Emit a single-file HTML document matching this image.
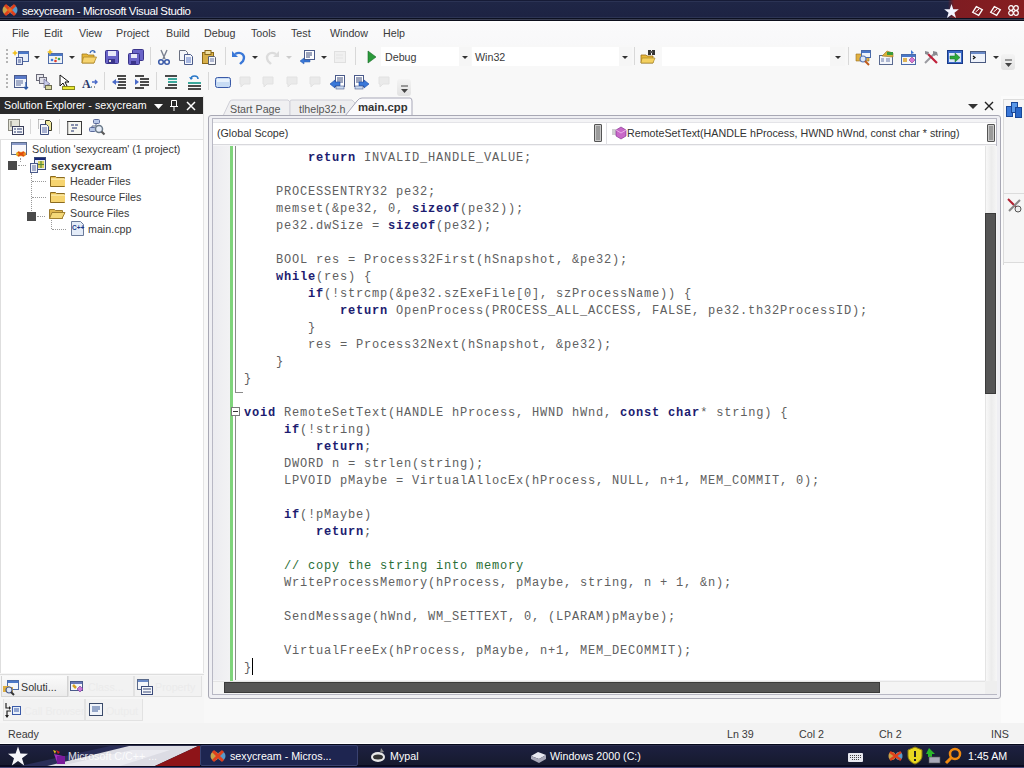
<!DOCTYPE html>
<html><head><meta charset="utf-8">
<style>
*{margin:0;padding:0;box-sizing:border-box}
html,body{width:1024px;height:768px;overflow:hidden;background:#f8f8f8;font-family:"Liberation Sans",sans-serif;font-size:10.7px;color:#3a3a3a}
.a{position:absolute}
.t{position:absolute;white-space:pre;line-height:13px}
svg{position:absolute;overflow:visible}
.cl{position:absolute;left:244px;white-space:pre;font-family:"Liberation Mono",monospace;font-size:12px;letter-spacing:0.8px;line-height:17px;color:#606060}
.k{color:#1c1c70;font-weight:bold}
.c{color:#2a6e35}
.dd{position:absolute;width:0;height:0;border-left:3px solid transparent;border-right:3px solid transparent;border-top:3px solid #333}
.sep{position:absolute;width:1px;background:#d8d8d8}
.grip{position:absolute;width:2px;height:16px;background:repeating-linear-gradient(180deg,#b4b4b4 0,#b4b4b4 2px,transparent 2px,transparent 4px)}
</style></head><body>

<!-- ===== title bar ===== -->
<div class="a" style="left:0;top:0;width:1024px;height:21px;background:linear-gradient(180deg,#161b36 0,#161b36 1px,#2b3354 1px,#2b3354 2px,#1f2646 2px,#1d2343 17px,#2c3454 17px,#2c3454 18px,#0c1020 18px,#0c1020 19px,#3a3e52 19px,#3a3e52 20px,#0c0f1c 20px)"></div>
<div class="a" style="left:948px;top:0;width:76px;height:18px;background:linear-gradient(90deg,rgba(128,28,32,0) 0,#7e1c22 6px,#861e20 100%)"></div>
<svg style="left:2px;top:3px" width="16" height="14" viewBox="0 0 16 14">
<ellipse cx="4.5" cy="7" rx="4" ry="4.5" fill="#c9a24a"/><ellipse cx="11.5" cy="7" rx="4" ry="4.5" fill="#5a9ac8"/>
<path d="M3 2 L13 12 M13 2 L3 12" stroke="#e0401c" stroke-width="3"/><circle cx="8" cy="7" r="2" fill="#f06a1a"/></svg>
<div class="t" style="left:22px;top:5px;color:#fff;font-size:11.5px;letter-spacing:-0.4px">sexycream - Microsoft Visual Studio</div>
<svg style="left:944px;top:4px" width="15" height="14" viewBox="0 0 20 19"><path d="M10 0 L12.4 7 L20 7.2 L14 11.8 L16.2 19 L10 14.6 L3.8 19 L6 11.8 L0 7.2 L7.6 7 Z" fill="#f4f4ff"/></svg>
<svg style="left:972px;top:6px" width="11" height="10" viewBox="0 0 11 10"><path d="M5.5 0.5 L10.5 5 L5.5 9.5 L0.5 5 Z" fill="none" stroke="#fff" stroke-width="1.3" transform="rotate(-15 5.5 5)"/><path d="M3.5 6 L7 3" stroke="#fff" stroke-width="1"/></svg>
<svg style="left:990px;top:6px" width="11" height="10" viewBox="0 0 11 10"><path d="M5.5 0.5 L10.5 5 L5.5 9.5 L0.5 5 Z" fill="none" stroke="#fff" stroke-width="1.3" transform="rotate(-15 5.5 5)"/><path d="M3.5 6 L7 3" stroke="#fff" stroke-width="1"/></svg>
<svg style="left:1008px;top:5px" width="11" height="11" viewBox="0 0 11 11"><circle cx="3" cy="3" r="2.3" fill="none" stroke="#fff" stroke-width="1.2"/><circle cx="8" cy="3" r="2.3" fill="none" stroke="#fff" stroke-width="1.2"/><circle cx="3" cy="8" r="2.3" fill="none" stroke="#fff" stroke-width="1.2"/><circle cx="8" cy="8" r="2.3" fill="none" stroke="#fff" stroke-width="1.2"/></svg>

<!-- ===== menu bar ===== -->
<div class="a" style="left:0;top:21px;width:1024px;height:24px;background:linear-gradient(180deg,#fff 0,#fafafb 3px,#f8f8f9 100%)"></div>
<div class="t" style="left:12px;top:27px">File</div>
<div class="t" style="left:44px;top:27px">Edit</div>
<div class="t" style="left:79px;top:27px">View</div>
<div class="t" style="left:116px;top:27px">Project</div>
<div class="t" style="left:166px;top:27px">Build</div>
<div class="t" style="left:204px;top:27px">Debug</div>
<div class="t" style="left:251px;top:27px">Tools</div>
<div class="t" style="left:291px;top:27px">Test</div>
<div class="t" style="left:330px;top:27px">Window</div>
<div class="t" style="left:383px;top:27px">Help</div>
<!-- toolbar area -->
<div class="a" style="left:0;top:45px;width:1024px;height:52px;background:#f8f8f8"></div>

<div class="grip" style="left:6px;top:49px"></div>
<svg style="left:13px;top:49px" width="16" height="16" viewBox="0 0 16 16"><rect x="5.5" y="2.5" width="10" height="10" fill="#e8eef8" stroke="#4f6ca8"/><rect x="6" y="3" width="9" height="2" fill="#4a78c8"/><rect x="3.5" y="8.5" width="6" height="7" fill="#e0e8f8" stroke="#4a5a90"/><path d="M5 11h3M5 13h3" stroke="#4a5a90"/><path d="M2 1l1 2 2 1-2 1-1 2-1-2-2-1 2-1z" fill="#f0c020"/></svg>
<div class="dd" style="left:34px;top:56px;border-top-color:#333"></div>
<svg style="left:47px;top:49px" width="16" height="16" viewBox="0 0 16 16"><rect x="1.5" y="4.5" width="14" height="10" fill="#eef2f8" stroke="#4f6ca8"/><rect x="2" y="5" width="13" height="2" fill="#4a78c8"/><circle cx="5" cy="11" r="1.3" fill="#3a7ad8"/><circle cx="8.5" cy="12" r="1.3" fill="#e03a2a"/><circle cx="12" cy="10" r="1.3" fill="#3aa85a"/><circle cx="9" cy="9" r="1.1" fill="#c8a020"/><path d="M3 0l1 2 2 1-2 1-1 2-1-2-2-1 2-1z" fill="#f0c020"/></svg>
<div class="dd" style="left:69px;top:56px;border-top-color:#333"></div>
<svg style="left:81px;top:49px" width="16" height="16" viewBox="0 0 16 16"><path d="M1 5h5l1 1h6v8H1z" fill="#e8b838" stroke="#a07820" stroke-width=".8"/><path d="M2.5 8h13l-2.5 6H1z" fill="#f6d470" stroke="#b08828" stroke-width=".8"/><path d="M9 4c1-3 4-3 5-1" stroke="#3a6ab8" stroke-width="1.3" fill="none"/><path d="M13 1.5l2 2-2.5.5z" fill="#3a6ab8"/></svg>
<svg style="left:104px;top:49px" width="16" height="16" viewBox="0 0 16 16"><rect x="1.5" y="1.5" width="13" height="13" rx="1" fill="#6a64c8" stroke="#3a348a"/><rect x="4" y="2" width="8" height="5" fill="#e8e8f8"/><rect x="4" y="10" width="7" height="4" fill="#3a348a"/><rect x="5" y="11" width="2" height="2" fill="#ddd"/></svg>
<svg style="left:128px;top:49px" width="16" height="16" viewBox="0 0 16 16"><rect x="4.5" y="0.5" width="11" height="11" rx="1" fill="#6a64c8" stroke="#3a348a"/><rect x="0.5" y="4.5" width="11" height="11" rx="1" fill="#6a64c8" stroke="#3a348a"/><rect x="3" y="5" width="6" height="4" fill="#e8e8f8"/><rect x="3" y="12" width="5" height="3" fill="#3a348a"/></svg>
<div class="sep" style="left:150px;top:47px;height:18px"></div>
<svg style="left:156px;top:49px" width="16" height="16" viewBox="0 0 16 16"><path d="M5 1l4 9M11 1l-4 9" stroke="#7a8090" stroke-width="1.4"/><circle cx="5" cy="13" r="2.3" fill="none" stroke="#3a5aa8" stroke-width="1.5"/><circle cx="11" cy="13" r="2.3" fill="none" stroke="#3a5aa8" stroke-width="1.5"/></svg>
<svg style="left:178px;top:49px" width="16" height="16" viewBox="0 0 16 16"><path d="M1.5 1.5h6l2 2v8h-8z" fill="#f4f6fa" stroke="#6a7080"/><path d="M6.5 5.5h6l2 2v8h-8z" fill="#f4f6fa" stroke="#4a5a8a"/><path d="M8 9h5M8 11h5M8 13h5" stroke="#5a78c8"/></svg>
<svg style="left:201px;top:49px" width="16" height="16" viewBox="0 0 16 16"><rect x="1.5" y="3.5" width="11" height="11" fill="#d8b048" stroke="#8a6818"/><rect x="4" y="1.5" width="6" height="4" fill="#f0e0a0" stroke="#8a6818"/><path d="M7.5 7.5h6l1 1v7h-7z" fill="#f6f7fa" stroke="#5a6070"/><path d="M9 10h4M9 12h4" stroke="#6a78a8"/></svg>
<div class="sep" style="left:225px;top:47px;height:18px"></div>
<svg style="left:231px;top:49px" width="16" height="16" viewBox="0 0 16 16"><path d="M4 5c6-3 11 1 8 7l-3 3" stroke="#3a78d8" stroke-width="2.4" fill="none"/><path d="M1 2v6h6z" fill="#3a78d8"/></svg>
<div class="dd" style="left:252px;top:56px;border-top-color:#333"></div>
<svg style="left:264px;top:49px" width="16" height="16" viewBox="0 0 16 16"><path d="M12 5c-6-3-11 1-8 7l3 3" stroke="#dcdcdc" stroke-width="2.4" fill="none"/><path d="M15 2v6h-6z" fill="#dcdcdc"/></svg>
<div class="dd" style="left:286px;top:56px;border-top-color:#ccc"></div>
<svg style="left:299px;top:49px" width="16" height="16" viewBox="0 0 16 16"><rect x="5.5" y="1.5" width="10" height="9" fill="#fff" stroke="#4a5a8a"/><path d="M7 4h6M7 6h6M7 8h4" stroke="#3a4a7a"/><path d="M1 12l4-3v2h6v2H5v2z" fill="#3a78d8" stroke="#2a58a8" stroke-width=".5"/></svg>
<div class="dd" style="left:321px;top:56px;border-top-color:#333"></div>
<svg style="left:332px;top:49px" width="16" height="16" viewBox="0 0 16 16"><rect x="2.5" y="2.5" width="11" height="11" fill="#f0f0f0" stroke="#e0e0e0"/><path d="M4 6h7M4 9h7" stroke="#e4e4e4"/></svg>
<div class="sep" style="left:355px;top:47px;height:18px"></div>
<svg style="left:364px;top:49px" width="16" height="16" viewBox="0 0 16 16"><path d="M4 2l8 6-8 6z" fill="#2a9a3a" stroke="#1a6a2a" stroke-width=".6"/></svg>
<div class="a" style="left:381px;top:47px;width:90px;height:19px;background:#fff"></div>
<div class="t" style="left:385px;top:51px;">Debug</div>
<div class="a" style="left:459px;top:47px;width:12px;height:19px;background:#f6f6f6"></div>
<div class="dd" style="left:462px;top:56px;border-top-color:#333"></div>
<div class="a" style="left:472px;top:47px;width:160px;height:19px;background:#fff"></div>
<div class="t" style="left:475px;top:51px;">Win32</div>
<div class="a" style="left:619px;top:47px;width:13px;height:19px;background:#f6f6f6"></div>
<div class="dd" style="left:622px;top:56px;border-top-color:#333"></div>
<div class="sep" style="left:634px;top:47px;height:18px"></div>
<svg style="left:640px;top:49px" width="16" height="16" viewBox="0 0 16 16"><path d="M1 6h5l1 1h6v7H1z" fill="#e8b838" stroke="#9a7020" stroke-width=".8"/><path d="M2 9h13l-2 5H1z" fill="#f4d060" stroke="#a08020" stroke-width=".6"/><rect x="8" y="1" width="3" height="5" fill="#333"/><rect x="12" y="1" width="3" height="5" fill="#333"/><rect x="10" y="2" width="3" height="2" fill="#555"/></svg>
<div class="a" style="left:662px;top:47px;width:183px;height:19px;background:#fff"></div>
<div class="a" style="left:830px;top:47px;width:15px;height:19px;background:#f6f6f6"></div>
<div class="dd" style="left:835px;top:56px;border-top-color:#333"></div>
<div class="sep" style="left:848px;top:47px;height:18px"></div>
<svg style="left:855px;top:49px" width="16" height="16" viewBox="0 0 16 16"><path d="M1 5h6l1 1h6v6H1z" fill="#e0b040" stroke="#9a7020" stroke-width=".6"/><rect x="6.5" y="1.5" width="9" height="7" fill="#eef3fa" stroke="#4a6aa8"/><rect x="7" y="2" width="8" height="2" fill="#4a78c8"/><circle cx="8" cy="10" r="3" fill="#dde8f8" stroke="#5a7ab8" stroke-width="1.2"/><path d="M10 12l4 4" stroke="#c05a1a" stroke-width="2"/></svg>
<svg style="left:878px;top:49px" width="16" height="16" viewBox="0 0 16 16"><rect x="1.5" y="6.5" width="13" height="9" fill="#f4f6fa" stroke="#5a6a90"/><path d="M3 10h3M3 12h3M8 10h4M8 12h4" stroke="#6a7aa8"/><path d="M4 7l5-5 6 2v4z" fill="#d8b038" stroke="#9a7020" stroke-width=".6"/><rect x="9" y="3" width="6" height="3" fill="#3a9a3a"/></svg>
<svg style="left:900px;top:49px" width="16" height="16" viewBox="0 0 16 16"><rect x="1.5" y="5.5" width="14" height="10" fill="#f4f6fa" stroke="#4a6aa8"/><rect x="2" y="6" width="13" height="2" fill="#4a78c8"/><path d="M3 10h4M3 12h4" stroke="#d8a020" stroke-width="1.5"/><path d="M12 8l3 3-3 3-3-3z" fill="#d878d0" stroke="#8a3a8a" stroke-width=".6"/><path d="M11 1l3 3-3 1z" fill="#3a78d8"/></svg>
<svg style="left:923px;top:49px" width="16" height="16" viewBox="0 0 16 16"><path d="M2 14L12 4" stroke="#9a9aa0" stroke-width="2"/><path d="M14 14L5 5" stroke="#c0203a" stroke-width="2.2"/><path d="M10 2l4 1 1 4-2-1-2 1-1-2z" fill="#8a8a90"/><path d="M2 2l4 1-1 3-3-1z" fill="#8a8a90"/></svg>
<svg style="left:947px;top:49px" width="16" height="16" viewBox="0 0 16 16"><rect x="0.5" y="1.5" width="15" height="13" fill="#3a6ac8" stroke="#1a3a88"/><rect x="2" y="4" width="12" height="9" fill="#dde8f8"/><path d="M3 7h5V4l5 4.5-5 4.5v-3H3z" fill="#2aa83a" stroke="#1a6a2a" stroke-width=".5"/></svg>
<svg style="left:970px;top:49px" width="16" height="16" viewBox="0 0 16 16"><rect x="0.5" y="2.5" width="15" height="11" fill="#eef2fa" stroke="#4a5a80"/><rect x="1" y="3" width="14" height="2" fill="#6a8ac8"/><path d="M3 7l2 1.5-2 1.5" stroke="#111" stroke-width="1.2" fill="none"/></svg>
<div class="dd" style="left:993px;top:56px;border-top-color:#333"></div>
<div class="a" style="left:1001px;top:54px;width:14px;height:16px;background:linear-gradient(180deg,#f4f4f4,#e2e2e2);border-radius:3px"></div>
<svg style="left:1004px;top:59px" width="9" height="10" viewBox="0 0 9 10"><path d="M1 1h7" stroke="#444"/><path d="M1 4h7l-3.5 4z" fill="#444"/></svg>
<div class="grip" style="left:6px;top:74px"></div>
<svg style="left:13px;top:74px" width="16" height="16" viewBox="0 0 16 16"><rect x="1.5" y="1.5" width="12" height="12" fill="#f0f4fa" stroke="#4a5a8a"/><rect x="2" y="2" width="11" height="3" fill="#5a7ac8"/><path d="M3 7h7M3 9h7M3 11h5" stroke="#5a6a9a"/><path d="M13 8v7M11 13l2 2 2-2" stroke="#2a58a8" stroke-width="1.3" fill="none"/></svg>
<svg style="left:36px;top:74px" width="16" height="16" viewBox="0 0 16 16"><rect x="0.5" y="0.5" width="7" height="6" fill="#e8e8ee" stroke="#6a6a78"/><rect x="3.5" y="3.5" width="7" height="6" fill="#e0e0e8" stroke="#6a6a78"/><path d="M8 5l6 5-3 1 2 3-1 1-2-3-2 2z" fill="#c8cce8" stroke="#5a5a8a" stroke-width=".6"/><rect x="9.5" y="11.5" width="6" height="4" fill="#d8d8a0" stroke="#6a6a50"/></svg>
<svg style="left:59px;top:74px" width="16" height="16" viewBox="0 0 16 16"><path d="M1 1v11l3-3 2 4 2-1-2-4h4z" fill="#fff" stroke="#111" stroke-width="1"/><rect x="3.5" y="12.5" width="12" height="3" fill="#e8e830" stroke="#8a8a20"/></svg>
<svg style="left:82px;top:74px" width="16" height="16" viewBox="0 0 16 16"><text x="0" y="14" font-family="Liberation Serif" font-weight="bold" font-size="12" fill="#2a3a6a">A</text><path d="M10 8h5M13 6l2 2-2 2" stroke="#4a6ac8" stroke-width="1.4" fill="none"/><path d="M9 13h1M12 13h1" stroke="#333"/></svg>
<div class="sep" style="left:104px;top:72px;height:18px"></div>
<svg style="left:111px;top:74px" width="16" height="16" viewBox="0 0 16 16"><path d="M6 2h9M7 5h8M7 8h8M7 11h8M6 14h9" stroke="#111" stroke-width="1.4"/><path d="M1 8l4-3v6z" fill="#4a6ac8"/><path d="M4 8h4" stroke="#4a6ac8" stroke-width="1.4"/></svg>
<svg style="left:134px;top:74px" width="16" height="16" viewBox="0 0 16 16"><path d="M1 2h9M6 5h9M6 8h9M6 11h9M1 14h9" stroke="#111" stroke-width="1.4"/><path d="M5 8L1 5v6z" fill="#4a6ac8"/></svg>
<div class="sep" style="left:156px;top:72px;height:18px"></div>
<svg style="left:163px;top:74px" width="16" height="16" viewBox="0 0 16 16"><path d="M2 2h12M5 5h9M5 8h9M5 11h9M2 14h12" stroke="#111" stroke-width="1.3"/><path d="M5 5h9M5 8h9" stroke="#38c8b8" stroke-width="1.3"/></svg>
<svg style="left:186px;top:74px" width="16" height="16" viewBox="0 0 16 16"><path d="M2 9h13M2 12h13M2 15h13" stroke="#111" stroke-width="1.3"/><path d="M2 9h13" stroke="#38c8b8" stroke-width="1.5"/><path d="M5 5c0-4 7-4 7 0" stroke="#2a78c8" stroke-width="1.6" fill="none"/><path d="M3 3l2 3 2-2z" fill="#2a78c8"/></svg>
<div class="sep" style="left:208px;top:72px;height:18px"></div>
<svg style="left:215px;top:74px" width="16" height="16" viewBox="0 0 16 16"><rect x="0.5" y="3.5" width="15" height="10" rx="2" fill="#c8dcf4" stroke="#3a5aa8"/><rect x="2" y="5" width="12" height="3" fill="#e8f2fc"/></svg>
<svg style="left:238px;top:74px" width="16" height="16" viewBox="0 0 16 16"><path d="M2 3h10v7H6l-3 3v-3H2z" fill="#eaeaea" stroke="#e2e2e2"/></svg>
<svg style="left:261px;top:74px" width="16" height="16" viewBox="0 0 16 16"><path d="M2 3h10v7H6l-3 3v-3H2z" fill="#eaeaea" stroke="#e2e2e2"/></svg>
<svg style="left:285px;top:74px" width="16" height="16" viewBox="0 0 16 16"><path d="M2 3h10v7H6l-3 3v-3H2z" fill="#eaeaea" stroke="#e2e2e2"/></svg>
<svg style="left:308px;top:74px" width="16" height="16" viewBox="0 0 16 16"><path d="M2 3h10v7H6l-3 3v-3H2z" fill="#eaeaea" stroke="#e2e2e2"/></svg>
<svg style="left:330px;top:74px" width="16" height="16" viewBox="0 0 16 16"><rect x="5.5" y="1.5" width="9" height="11" fill="#fff" stroke="#4a5a8a"/><path d="M7 4h6M7 6h6M7 8h6" stroke="#3a4a7a"/><path d="M0 10l5-4v2h5v4H5v2z" fill="#3a78d8" stroke="#1a48a8" stroke-width=".6"/><rect x="6" y="12" width="8" height="3" fill="#c8d8f0" stroke="#4a5a8a" stroke-width=".6"/></svg>
<svg style="left:353px;top:74px" width="16" height="16" viewBox="0 0 16 16"><rect x="1.5" y="1.5" width="9" height="11" fill="#fff" stroke="#4a5a8a"/><path d="M3 4h6M3 6h6M3 8h6" stroke="#3a4a7a"/><path d="M16 10l-5-4v2H6v4h5v2z" fill="#3a78d8" stroke="#1a48a8" stroke-width=".6"/><rect x="2" y="12" width="8" height="3" fill="#c8d8f0" stroke="#4a5a8a" stroke-width=".6"/></svg>
<svg style="left:377px;top:74px" width="16" height="16" viewBox="0 0 16 16"><path d="M2 3h10v7H6l-3 3v-3H2z" fill="#eaeaea" stroke="#e2e2e2"/></svg>
<div class="a" style="left:397px;top:79px;width:14px;height:17px;background:linear-gradient(180deg,#f4f4f4,#e2e2e2);border-radius:3px"></div>
<svg style="left:400px;top:85px" width="9" height="10" viewBox="0 0 9 10"><path d="M1 1h7" stroke="#444"/><path d="M1 4h7l-3.5 4z" fill="#444"/></svg>
<div class="a" style="left:0px;top:97px;width:204px;height:17px;background:#2a2a2a"></div>
<div class="t" style="left:4px;top:99px;color:#fff">Solution Explorer - sexycream</div>
<svg style="left:154px;top:104px" width="9" height="5" viewBox="0 0 9 5"><path d="M0 0h9L4.5 5z" fill="#fff"/></svg>
<svg style="left:170px;top:100px" width="8" height="11" viewBox="0 0 8 11"><path d="M1.5 0.5h5v6h-5zM0 6.5h8M4 7v4" stroke="#fff" fill="none"/></svg>
<svg style="left:186px;top:101px" width="10" height="10" viewBox="0 0 10 10"><path d="M1 1l8 8M9 1l-8 8" stroke="#fff" stroke-width="1.5"/></svg>
<div class="a" style="left:0px;top:114px;width:204px;height:26px;background:#fbfbfb"></div>
<div class="a" style="left:0px;top:139px;width:204px;height:1px;background:#e2e2e2"></div>
<svg style="left:8px;top:119px" width="16" height="16" viewBox="0 0 16 16"><rect x="0.5" y="0.5" width="11" height="11" fill="#e4e4d8" stroke="#8a8a80"/><path d="M2 3h2M2 5h2M2 7h2" stroke="#6a6a60"/><rect x="4.5" y="7.5" width="11" height="8" fill="#f4f6fa" stroke="#3a3e5a"/><path d="M6 10h2M9 10h5M6 13h2M9 13h5" stroke="#2a3a6a"/></svg>
<div class="sep" style="left:30px;top:119px;height:15px"></div>
<svg style="left:37px;top:119px" width="16" height="16" viewBox="0 0 16 16"><path d="M1.5 0.5v10" stroke="#888" stroke-dasharray="1 1"/><path d="M1.5 0.5h5" stroke="#888" stroke-dasharray="1 1"/><path d="M8.5 1.5h4l2 2v8h-6z" fill="#f0e8a0" stroke="#3a3a2a"/><path d="M3.5 5.5h6l2 2v8h-8z" fill="#f4f6fa" stroke="#3a4a7a"/><path d="M5 9h5M5 11h5M5 13h5" stroke="#5a6aa8"/></svg>
<div class="sep" style="left:59px;top:119px;height:15px"></div>
<svg style="left:67px;top:121px" width="16" height="15" viewBox="0 0 16 15"><rect x="0.5" y="0.5" width="14" height="13" fill="#f6f6f0" stroke="#3a3a3a"/><path d="M1 1v12" stroke="#aaa"/><path d="M4 4h3M5 7h5M4 10h3M8 4h3" stroke="#1a2a6a" stroke-width="1.2"/></svg>
<svg style="left:89px;top:119px" width="16" height="16" viewBox="0 0 16 16"><rect x="4.5" y="0.5" width="6" height="4" rx="1" fill="#b8c8e8" stroke="#5a6a9a"/><rect x="0.5" y="8.5" width="6" height="4" rx="1" fill="#b8c8e8" stroke="#5a6a9a"/><path d="M7 5v2H3v1" stroke="#5a6a8a" fill="none"/><circle cx="10" cy="10" r="3.5" fill="#e8eef8" stroke="#6a7a8a" stroke-width="1.5"/><path d="M12.5 12.5l3 3" stroke="#5a5a5a" stroke-width="2.2"/></svg>
<div class="a" style="left:0px;top:140px;width:204px;height:534px;background:#fff"></div>
<div class="a" style="left:203px;top:96px;width:1px;height:578px;background:#e4e4e4"></div>
<div class="a" style="left:0px;top:140px;width:1px;height:534px;background:#dedede"></div>
<svg style="left:11px;top:142px" width="16" height="16" viewBox="0 0 16 16"><rect x="0.5" y="0.5" width="15" height="12" fill="#f8f8fc" stroke="#5a6a8a"/><rect x="1" y="1" width="14" height="2" fill="#8a9ac8"/><ellipse cx="8" cy="12" rx="3" ry="2.5" fill="#e8b020"/><ellipse cx="12" cy="12" rx="3" ry="2.5" fill="#e89020"/><path d="M7 10l6 4M13 10l-6 4" stroke="#e04a10" stroke-width="1.6"/></svg>
<div class="t" style="left:32px;top:143px;">Solution 'sexycream' (1 project)</div>
<div class="a" style="left:8px;top:161px;width:9px;height:9px;background:#4a4a4a"></div>
<div class="a" style="left:18px;top:165px;width:8px;border-top:1px dotted #999"></div>
<div class="a" style="left:20px;top:158px;height:4px;border-left:1px dotted #999"></div>
<svg style="left:30px;top:157px" width="16" height="16" viewBox="0 0 16 16"><rect x="4.5" y="0.5" width="11" height="12" fill="#e8eef8" stroke="#3a4a78"/><rect x="5" y="1" width="10" height="2" fill="#1a2a78"/><path d="M8 4h6v7H8z" fill="#d8d060"/><path d="M11 4v7M8 7.5h6" stroke="#5a8a3a" stroke-width="1.2"/><rect x="0.5" y="6.5" width="7" height="9" fill="#f0f2f8" stroke="#4a5a8a"/><path d="M2 9h4M2 11h4M2 13h4" stroke="#5a6aa0"/></svg>
<div class="t" style="left:51px;top:159px;font-weight:bold;font-size:11.6px;letter-spacing:0.1px;color:#3a3a3a">sexycream</div>
<div class="a" style="left:31px;top:173px;height:40px;border-left:1px dotted #999"></div>
<div class="a" style="left:32px;top:181px;width:14px;border-top:1px dotted #999"></div>
<div class="a" style="left:32px;top:197px;width:14px;border-top:1px dotted #999"></div>
<svg style="left:50px;top:175px" width="16" height="13" viewBox="0 0 16 13"><path d="M0.5 1.5h5l1 1h8v9H0.5z" fill="#e8c050" stroke="#8a6a20"/><rect x="1" y="4" width="14" height="7" fill="#f6d470"/><path d="M1 4h14" stroke="#fff6c8"/></svg>
<div class="t" style="left:70px;top:175px;">Header Files</div>
<svg style="left:50px;top:191px" width="16" height="13" viewBox="0 0 16 13"><path d="M0.5 1.5h5l1 1h8v9H0.5z" fill="#e8c050" stroke="#8a6a20"/><rect x="1" y="4" width="14" height="7" fill="#f6d470"/><path d="M1 4h14" stroke="#fff6c8"/></svg>
<div class="t" style="left:70px;top:191px;">Resource Files</div>
<div class="a" style="left:27px;top:212px;width:9px;height:9px;background:#4a4a4a"></div>
<div class="a" style="left:37px;top:216px;width:8px;border-top:1px dotted #999"></div>
<svg style="left:49px;top:207px" width="16" height="13" viewBox="0 0 16 13"><path d="M0.5 2.5h5l1 1h7v8H0.5z" fill="#e0b850" stroke="#9a7a30"/><path d="M3 5.5h13l-3 6H0.5z" fill="#f4d878" stroke="#a08030"/></svg>
<div class="t" style="left:70px;top:207px;">Source Files</div>
<div class="a" style="left:51px;top:220px;height:9px;border-left:1px dotted #999"></div>
<div class="a" style="left:52px;top:229px;width:14px;border-top:1px dotted #999"></div>
<svg style="left:69px;top:221px" width="16" height="16" viewBox="0 0 16 16"><path d="M2.5 0.5h9l3 3v11h-12z" fill="#e4ecf8" stroke="#6a7a9a"/><text x="3" y="9" font-family="Liberation Sans" font-weight="bold" font-size="6.5" fill="#1a3a8a">C++</text></svg>
<div class="t" style="left:88px;top:223px;">main.cpp</div>
<div class="a" style="left:0px;top:673px;width:204px;height:50px;background:#f6f6f6"></div>
<div class="a" style="left:0px;top:674px;width:204px;height:1px;background:#dedede"></div>
<div class="a" style="left:1px;top:676px;width:67px;height:21px;background:linear-gradient(180deg,#fafafa,#ececec);border:1px solid #d4d4d4;border-top:none"></div>
<div class="a" style="left:68px;top:676px;width:66px;height:21px;background:#f2f2f2;border:1px solid #e2e2e2;border-top:none"></div>
<div class="a" style="left:134px;top:676px;width:68px;height:21px;background:#f2f2f2;border:1px solid #e2e2e2;border-top:none"></div>
<svg style="left:3px;top:680px" width="16" height="16" viewBox="0 0 16 16"><rect x="4.5" y="0.5" width="11" height="9" fill="#f4f6fa" stroke="#4a6aa8"/><rect x="5" y="1" width="10" height="2" fill="#4a78c8"/><path d="M0 6h6l1 1h3v5H0z" fill="#e0b040"/><circle cx="6" cy="10" r="3" fill="#dde8f8" stroke="#4a5a8a" stroke-width="1.2"/><path d="M8 12l3 3" stroke="#333" stroke-width="2"/></svg>
<div class="t" style="left:21px;top:681px;color:#333">Soluti...</div>
<svg style="left:70px;top:680px" width="16" height="16" viewBox="0 0 16 16"><rect x="0.5" y="1.5" width="12" height="9" fill="#f4f6fa" stroke="#4a5a8a"/><rect x="1" y="2" width="11" height="2" fill="#6a7ab8"/><path d="M3 5l3 3" stroke="#d8a020" stroke-width="2.5"/><path d="M10 6l3 3-3 3-3-3z" fill="#c878d8" stroke="#7a3a9a" stroke-width=".6"/></svg>
<div class="t" style="left:88px;top:681px;color:#ebebeb">Class...</div>
<svg style="left:137px;top:679px" width="16" height="16" viewBox="0 0 16 16"><rect x="0.5" y="0.5" width="11" height="10" fill="#f4f6fa" stroke="#5a6a8a"/><rect x="1" y="1" width="10" height="2" fill="#6a8ac8"/><rect x="4.5" y="7.5" width="11" height="8" fill="#f4f6fa" stroke="#3a4a7a"/><path d="M6 10h8M6 13h8" stroke="#3a4a7a"/></svg>
<div class="t" style="left:155px;top:681px;color:#ebebeb">Property</div>
<div class="a" style="left:3px;top:699px;width:82px;height:22px;background:#f2f2f2;border:1px solid #e2e2e2;border-top:none"></div>
<div class="a" style="left:85px;top:699px;width:58px;height:22px;background:#f2f2f2;border:1px solid #e2e2e2;border-top:none"></div>
<svg style="left:5px;top:703px" width="16" height="16" viewBox="0 0 16 16"><path d="M1 0v5h4" stroke="#222" stroke-width="1.2" fill="none"/><path d="M4 3l2 2-2 2z" fill="#222"/><path d="M6 8H2v6" stroke="#222" stroke-width="1.2" fill="none"/><path d="M0 12l2 3 2-3z" fill="#222"/><rect x="7.5" y="3.5" width="8" height="8" fill="#e8f0fa" stroke="#3a5aa8"/><path d="M9 6h5M9 8h5" stroke="#3a5aa8"/></svg>
<div class="t" style="left:24px;top:705px;color:#ececec">Call Browser</div>
<svg style="left:89px;top:703px" width="16" height="14" viewBox="0 0 16 14"><rect x="0.5" y="0.5" width="13" height="12" fill="#f0f4fa" stroke="#3a4a6a"/><path d="M3 4h8M3 6h8M3 8h6" stroke="#3a5a98"/></svg>
<div class="t" style="left:106px;top:705px;color:#ececec">Output</div>
<svg style="left:220px;top:98px" width="200" height="19" viewBox="0 0 200 19"><path d="M3 18 L10 3 Q11 2 13 2 L68 2 L70 4 L70 18" fill="#f0f0f2" stroke="#d0d0d8"/><path d="M70 18 L70 3 Q70 2 72 2 L132 2 L135 5 L135 18" fill="#eeeef0" stroke="#d0d0d8"/><path d="M125 18 L137 3 Q139 0 142 0 L190 0 Q192 0 192 3 L192 18" fill="#fafafc" stroke="#a8a8b8"/></svg>
<div class="t" style="left:230px;top:103px;color:#555">Start Page</div>
<div class="t" style="left:299px;top:103px;color:#555">tlhelp32.h</div>
<div class="t" style="left:358px;top:101px;font-weight:bold;font-size:11.3px;color:#333">main.cpp</div>
<svg style="left:968px;top:104px" width="10" height="6" viewBox="0 0 10 6"><path d="M0 0h10L5 5z" fill="#333"/></svg>
<svg style="left:984px;top:101px" width="10" height="10" viewBox="0 0 10 10"><path d="M1 1l8 8M9 1l-8 8" stroke="#222" stroke-width="1.4"/></svg>
<div class="a" style="left:208px;top:115px;width:793px;height:584px;background:#efeff3;border:1px solid #a8a8b4;border-radius:3px"></div>
<div class="a" style="left:212px;top:118px;width:785px;height:577px;background:#f4f4f6;border:1px solid #b8b8c4"></div>
<div class="a" style="left:213px;top:122px;width:394px;height:23px;background:#fff;border-bottom:1px solid #d8d8dc;border-top:1px solid #e4e4e8"></div>
<div class="t" style="left:217px;top:127px;color:#333">(Global Scope)</div>
<div class="a" style="left:594px;top:124px;width:8px;height:18px;background:#9a9a9a;border:1px solid #555;border-radius:1px;box-shadow:inset 0 0 0 1px #c8c8c8"></div>
<div class="a" style="left:606px;top:122px;width:390px;height:23px;background:#fff;border-bottom:1px solid #d8d8dc;border-top:1px solid #e4e4e8;border-left:1px solid #e0e0e4"></div>
<svg style="left:612px;top:127px" width="14" height="12" viewBox="0 0 14 12"><path d="M0 3h4M0 5h4M0 7h4" stroke="#888" stroke-width=".8"/><path d="M9 0l5 3v6l-5 3-5-3V3z" fill="#c868c8" stroke="#7a2a8a" stroke-width=".6"/><path d="M4 3l5 3 5-3" stroke="#f0c0f0" stroke-width=".8" fill="none"/></svg>
<div class="t" style="left:627px;top:127px;color:#333">RemoteSetText(HANDLE hProcess, HWND hWnd, const char * string)</div>
<div class="a" style="left:987px;top:124px;width:8px;height:18px;background:#9a9a9a;border:1px solid #555;border-radius:1px;box-shadow:inset 0 0 0 1px #c8c8c8"></div>
<div class="a" style="left:213px;top:146px;width:773px;height:534px;background:#fff"></div>
<div class="a" style="left:213px;top:146px;width:17px;height:534px;background:linear-gradient(90deg,#ececf0,#f2f2f4)"></div>
<div class="a" style="left:230px;top:146px;width:3px;height:536px;background:#80d47c"></div>
<div class="a" style="left:235px;top:146px;width:1px;height:246px;background:#8a8a8a"></div>
<div class="a" style="left:235px;top:392px;width:8px;height:1px;background:#8a8a8a"></div>
<svg style="left:231px;top:407px" width="9" height="9" viewBox="0 0 9 9"><rect x="0.5" y="0.5" width="8" height="8" fill="#fff" stroke="#7a7a7a"/><path d="M2 4.5h5" stroke="#333"/></svg>
<div class="a" style="left:235px;top:416px;width:1px;height:264px;background:#8a8a8a"></div>
<div class="cl" style="top:150px">        <span class="k">return</span> INVALID_HANDLE_VALUE;</div>
<div class="cl" style="top:184px">    PROCESSENTRY32 pe32;</div>
<div class="cl" style="top:201px">    memset(&amp;pe32, 0, <span class="k">sizeof</span>(pe32));</div>
<div class="cl" style="top:218px">    pe32.dwSize = <span class="k">sizeof</span>(pe32);</div>
<div class="cl" style="top:252px">    BOOL res = Process32First(hSnapshot, &amp;pe32);</div>
<div class="cl" style="top:269px">    <span class="k">while</span>(res) {</div>
<div class="cl" style="top:286px">        <span class="k">if</span>(!strcmp(&amp;pe32.szExeFile[0], szProcessName)) {</div>
<div class="cl" style="top:303px">            <span class="k">return</span> OpenProcess(PROCESS_ALL_ACCESS, FALSE, pe32.th32ProcessID);</div>
<div class="cl" style="top:320px">        }</div>
<div class="cl" style="top:337px">        res = Process32Next(hSnapshot, &amp;pe32);</div>
<div class="cl" style="top:354px">    }</div>
<div class="cl" style="top:371px">}</div>
<div class="cl" style="top:405px"><span class="k">void</span> RemoteSetText(HANDLE hProcess, HWND hWnd, <span class="k">const</span> <span class="k">char</span>* string) {</div>
<div class="cl" style="top:422px">     <span class="k">if</span>(!string)</div>
<div class="cl" style="top:439px">         <span class="k">return</span>;</div>
<div class="cl" style="top:456px">     DWORD n = strlen(string);</div>
<div class="cl" style="top:473px">     LPVOID pMaybe = VirtualAllocEx(hProcess, NULL, n+1, MEM_COMMIT, 0);</div>
<div class="cl" style="top:507px">     <span class="k">if</span>(!pMaybe)</div>
<div class="cl" style="top:524px">         <span class="k">return</span>;</div>
<div class="cl" style="top:558px">     <span class="c">// copy the string into memory</span></div>
<div class="cl" style="top:575px">     WriteProcessMemory(hProcess, pMaybe, string, n + 1, &amp;n);</div>
<div class="cl" style="top:609px">     SendMessage(hWnd, WM_SETTEXT, 0, (LPARAM)pMaybe);</div>
<div class="cl" style="top:643px">     VirtualFreeEx(hProcess, pMaybe, n+1, MEM_DECOMMIT);</div>
<div class="cl" style="top:660px">}</div>
<div class="a" style="left:252px;top:658px;width:1px;height:17px;background:#000"></div>
<div class="a" style="left:985px;top:146px;width:12px;height:535px;background:linear-gradient(90deg,#f8f8f8,#ececec 50%,#f6f6f6);border-left:1px solid #e4e4e4"></div>
<div class="a" style="left:985px;top:213px;width:11px;height:181px;background:#555;border:1px solid #3a3a3a"></div>
<div class="a" style="left:213px;top:681px;width:773px;height:13px;background:#f4f4f4;border-top:1px solid #e4e4e4"></div>
<div class="a" style="left:224px;top:682px;width:656px;height:11px;background:#555;border:1px solid #3a3a3a"></div>
<div class="a" style="left:985px;top:681px;width:12px;height:13px;background:#eee"></div>
<div class="a" style="left:1001px;top:96px;width:23px;height:627px;background:#fbfbfb"></div>
<div class="a" style="left:1003px;top:99px;width:1px;height:166px;background:#d8d8d8"></div>
<div class="a" style="left:1003px;top:99px;width:21px;height:95px;background:#f6f6f6;border:1px solid #dcdcdc;border-right:none"></div>
<svg style="left:1006px;top:102px" width="16" height="16" viewBox="0 0 16 16"><rect x="0.5" y="4.5" width="6" height="10" fill="#3a78d8" stroke="#1a4898"/><rect x="5.5" y="0.5" width="6" height="10" fill="#5a98e8" stroke="#1a4898"/><rect x="9.5" y="5.5" width="6" height="10" fill="#2a68c8" stroke="#1a4898"/></svg>
<div class="a" style="left:1003px;top:193px;width:21px;height:70px;background:#f6f6f6;border:1px solid #dcdcdc;border-right:none"></div>
<svg style="left:1006px;top:197px" width="16" height="16" viewBox="0 0 16 16"><path d="M2 2l12 12" stroke="#b02030" stroke-width="2"/><path d="M14 3L3 14" stroke="#888" stroke-width="2"/><circle cx="12" cy="12" r="3" fill="#eee" stroke="#555"/></svg>
<div class="a" style="left:0px;top:723px;width:1024px;height:20px;background:#f3f3f3"></div>
<div class="a" style="left:0px;top:743px;width:1024px;height:1px;background:#fff"></div>
<div class="t" style="left:8px;top:728px;">Ready</div>
<div class="t" style="left:727px;top:728px;">Ln 39</div>
<div class="t" style="left:799px;top:728px;">Col 2</div>
<div class="t" style="left:879px;top:728px;">Ch 2</div>
<div class="t" style="left:991px;top:728px;">INS</div>
<div class="a" style="left:0px;top:744px;width:1024px;height:24px;background:linear-gradient(180deg,#05081a 0,#05081a 1px,#2c2e4c 1px,#2c2e4c 2px,#1d2040 2px,#161a2e 21px,#080a20 21px,#080a20 23px,#4a4a78 23px)"></div>
<svg style="left:0;top:744px" width="200" height="24" viewBox="0 0 200 24"><path d="M20 22 L110 2 L129 2 L47 22 Z" fill="#2a2e58"/><path d="M47 22 L129 2 L198 2 L155 22 Z" fill="#dcdce4"/><path d="M60 22 L132 6 L170 6 L120 22 Z" fill="#f4f4f8" opacity=".6"/><path d="M155 22 L198 2 L200 2 L200 22 Z" fill="#8e1418"/></svg>
<svg style="left:8px;top:746px" width="20" height="20" viewBox="0 0 20 19"><path d="M10 0 L12.4 7 L20 7.2 L14 11.8 L16.2 19 L10 14.6 L3.8 19 L6 11.8 L0 7.2 L7.6 7 Z" fill="#f6f6fa"/></svg>
<svg style="left:51px;top:748px" width="16" height="16" viewBox="0 0 16 16"><path d="M2 2l3 1-1 3z" fill="#e0c020"/><path d="M5 2l4 2-2 2z" fill="#d02020"/><path d="M3 6l3 8 6-6z" fill="#a030c0"/><rect x="6" y="8" width="8" height="8" fill="#7a1a9a"/></svg>
<div class="t" style="left:68px;top:750px;color:#fff;opacity:.85">Microsoft C/C++ ...</div>
<div class="a" style="left:200px;top:745px;width:158px;height:21px;background:#1e2550;border:1px solid #3a4270;border-radius:2px"></div>
<svg style="left:210px;top:748px" width="16" height="16" viewBox="0 0 16 16"><ellipse cx="4.5" cy="8" rx="4" ry="4.5" fill="#c9a24a"/><ellipse cx="11.5" cy="8" rx="4" ry="4.5" fill="#5a9ac8"/><path d="M3 3 L13 13 M13 3 L3 13" stroke="#e0401c" stroke-width="3"/></svg>
<div class="t" style="left:230px;top:750px;color:#fff">sexycream - Micros...</div>
<svg style="left:370px;top:747px" width="16" height="16" viewBox="0 0 16 16"><ellipse cx="8" cy="10" rx="7" ry="5" fill="#e8e8e8"/><ellipse cx="8" cy="10" rx="5" ry="2.5" fill="#333"/><path d="M11 1l3 4-4 1z" fill="#888"/></svg>
<div class="t" style="left:390px;top:750px;color:#fff">Mypal</div>
<svg style="left:530px;top:749px" width="16" height="14" viewBox="0 0 16 14"><path d="M1 7l7-4 8 3-7 4z" fill="#e8e8f0"/><path d="M1 7v3l8 4 7-4V6l-7 4z" fill="#a8a8b8"/></svg>
<div class="t" style="left:550px;top:750px;color:#fff">Windows 2000 (C:)</div>
<svg style="left:848px;top:753px" width="15" height="9" viewBox="0 0 15 9"><rect x="0" y="0" width="15" height="9" rx="1" fill="#e8e8f0"/><path d="M2 2.5h11M2 4.5h11M4 6.5h7" stroke="#444" stroke-dasharray="1 1"/></svg>
<svg style="left:888px;top:750px" width="16" height="12" viewBox="0 0 16 12"><ellipse cx="4" cy="6" rx="3.5" ry="4" fill="#c9a24a"/><ellipse cx="11" cy="6" rx="3.5" ry="4" fill="#5a9ac8"/><path d="M2 2 L13 10 M13 2 L2 10" stroke="#e0401c" stroke-width="2.5"/></svg>
<svg style="left:908px;top:747px" width="14" height="17" viewBox="0 0 14 17"><path d="M7 0l7 3v6c0 4-4 7-7 8-3-1-7-4-7-8V3z" fill="#e8d820" stroke="#8a7a10"/><rect x="6" y="4" width="2" height="6" fill="#222"/><rect x="6" y="12" width="2" height="2" fill="#222"/></svg>
<svg style="left:925px;top:748px" width="16" height="16" viewBox="0 0 16 16"><path d="M2 0l6 6H5v3H1V6H-1z" fill="#2ab82a" transform="translate(2,0)"/><rect x="4" y="9" width="11" height="6" fill="#a8a8b8" stroke="#555" stroke-width=".6"/></svg>
<svg style="left:945px;top:747px" width="16" height="17" viewBox="0 0 16 17"><circle cx="10" cy="7" r="5" fill="none" stroke="#f08a10" stroke-width="2.5"/><path d="M6 11l-5 5" stroke="#f08a10" stroke-width="3"/></svg>
<div class="t" style="left:968px;top:750px;color:#fff">1:45 AM</div>
</body></html>
